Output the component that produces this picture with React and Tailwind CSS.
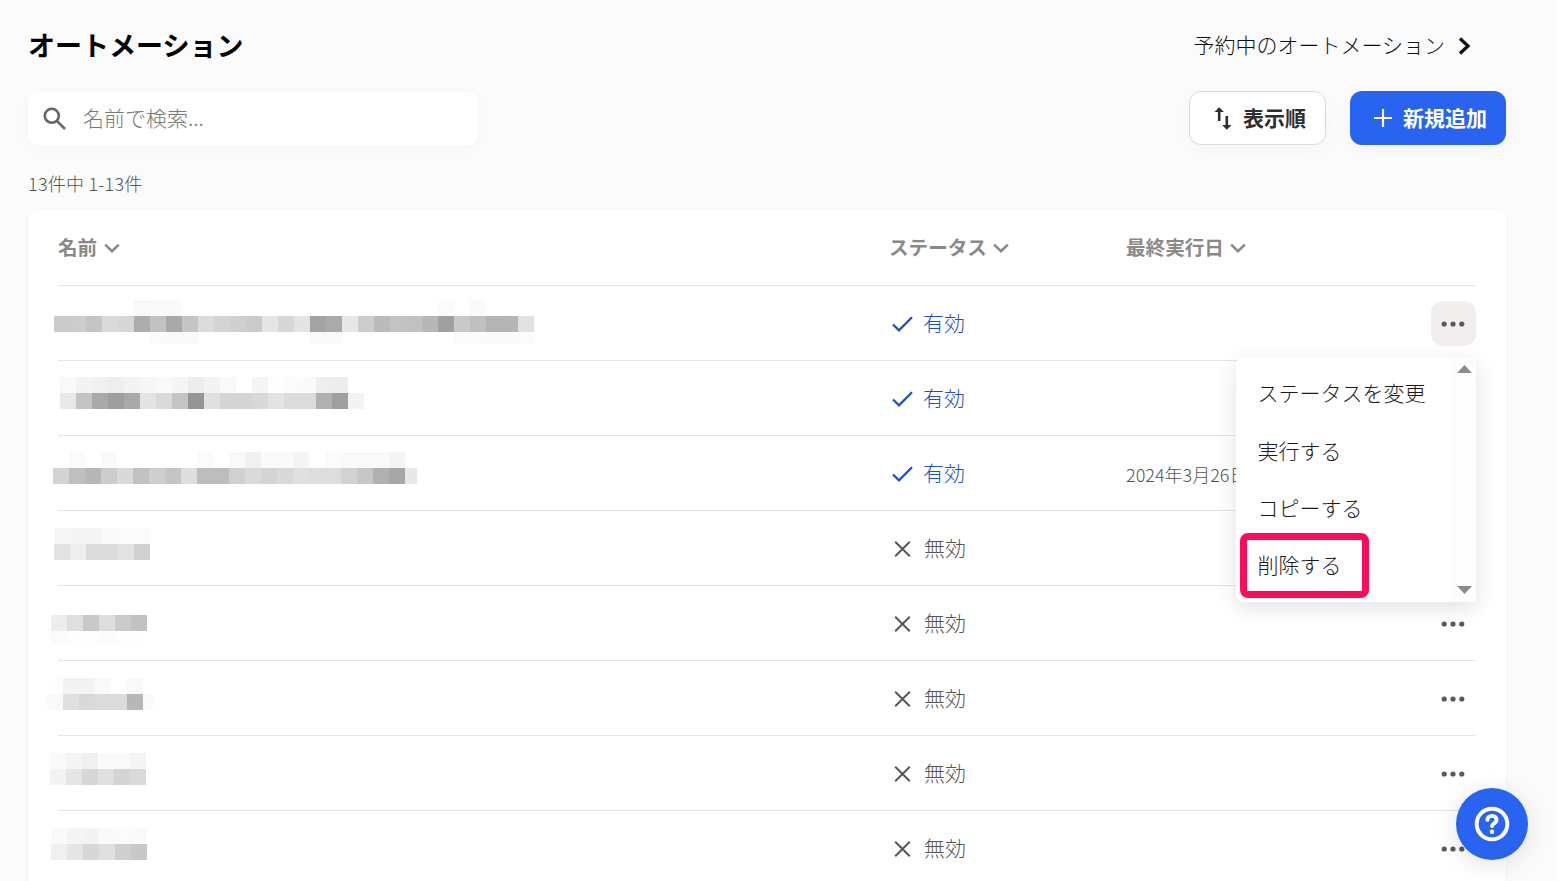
import { useState } from 'react';

// Each redacted name is a strip of 16px tiles, "-" means an empty tile
const automations = [
  {
    id: 1, active: true, date: '', x: -4, y: 14, last: 16, heights: [16, 16, 12],
    tiles: [
      '- - - - - f9f9f7 fafafa fbf9fa - - - - - - - - - - - - - - - - fbfbfb - fafafa - - -',
      'cbcbcb cdcdcd c5c5c5 dadada d6d6d6 adadad c2c2c2 a9a9a9 c5c5c5 dbdbdb d4d4d4 cfcfcf cbcbcb e5e5e5 d7d7d7 e4e4e4 a3a3a3 ababab e7e7e7 cdcdcd bbbbbb c3c3c3 c1c1c1 b7b7b7 a0a0a0 c9c9c9 c0c0c0 b4b4b4 b5b5b5 e2e2e2',
      '- - - - - - fbfbfb fafafa fbf8f9 - - - - - - - f9f9f7 fafafa - - - - - - - fbfbfb fbfbfb fafafa faf9f8 fbfbfb',
    ],
  },
  {
    id: 2, active: true, date: '', x: 2, y: 16, last: 16, heights: [16, 16],
    tiles: [
      'faf9f8 f3f3f3 f1f1f1 eeeeee f3f3f3 f6f6f6 fbf9fa f5f5f5 ededeb f3f3f3 f9f9f7 - f5f5f5 fefefe fbfbfb fafafa eeeeee ededeb -',
      'e9e9e9 c4c4c4 a9a9a9 9e9e9e a9a9a9 e4e4e4 dadada c5c5c5 949494 e0e0e0 d5d5d5 d5d5d5 d9d9d9 e3e3e3 dbdbdb dbdbdb b1b1b1 9f9f9f f3f3f3',
    ],
  },
  {
    id: 3, active: true, date: '2024年3月26日', x: -5, y: 16, last: 12, heights: [16, 16],
    tiles: [
      '- fbfbfb - fbf9fa - - - - - fbfbfb - f9f9f8 f0f0f0 fafafa fafafa f5f5f5 - fbfbfb faf9f8 faf9f8 f9f9f8 f4f4f4 -',
      'd3d3d3 bfbfbf b7b7b7 cdcdcd d9d9d9 c2c2c2 cecece c5c5c5 dedede bdbdbd bdbdbd d0d0d0 dadada d4d4d4 d9d9d9 e0e0e0 dddddd dddddd d2d2d2 c7c7c7 b1b1b1 a7a7a7 e8e8e8',
    ],
  },
  {
    id: 4, active: false, date: '', x: -4, y: 17, last: 16, heights: [16, 16],
    tiles: [
      'f6f6f6 f4f4f4 f4f4f4 fbf9fa fbfbfb fbfbfb',
      'e3e3e3 eeeeee dbdbdb dbdbdb e3e3e3 d0d0d0',
    ],
  },
  {
    id: 5, active: false, date: '', x: -7, y: 29, last: 16, heights: [16, 13],
    tiles: [
      'ededeb dfdfdf c9c9c9 dedede cbcbcb c2c2c2',
      'fbfbfb fefefe fefefe fbfbfb fefefe fefefe',
    ],
  },
  {
    id: 6, active: false, date: '', x: -11, y: 17, last: 10, heights: [16, 16],
    tiles: [
      'fefefe f3f3f3 f3f3f3 f9f9f7 - f9f9f7 -',
      'fafafa e0e0e0 d9d9d9 dbdbdb dbdbdb b7b7b7 fbf9fa',
    ],
  },
  {
    id: 7, active: false, date: '', x: -8, y: 17, last: 16, heights: [16, 16],
    tiles: [
      'fafafa f4f4f4 f0f0f0 fbf9fa fafafa f4f4f4',
      'f3f3f3 e5e5e5 d7d7d7 e0e0e0 d4d4d4 dadada',
    ],
  },
  {
    id: 8, active: false, date: '', x: -7, y: 17, last: 16, heights: [16, 16],
    tiles: [
      'fbf9fa f5f5f5 f3f3f3 fbf9fa fbfbfb fafafa',
      'f0f0f0 e5e5e5 d7d7d7 e0e0e0 cfcfcf c8c8c8',
    ],
  },
];

const menuItems = ['ステータスを変更', '実行する', 'コピーする', '削除する'];

function MaskedName({ row }) {
  return (
    <div className="self-start" style={{ marginLeft: row.x, marginTop: row.y }}>
      {row.tiles.map((line, i) => (
        <div key={i} className="flex" style={{ height: row.heights[i] }}>
          {line.split(' ').map((color, j, all) => (
            <div
              key={j}
              className="shrink-0"
              style={{
                width: j === all.length - 1 ? row.last : 16,
                backgroundColor: color === '-' ? 'transparent' : `#${color}`,
              }}
            />
          ))}
        </div>
      ))}
    </div>
  );
}

function ColumnTitle({ label }) {
  return (
    <div className="flex items-center gap-[6.5px] text-[19.6px] font-bold text-[#8b8987]">
      <span className="mb-[2px]">{label}</span>
      <svg className="mt-px" width="16" height="10" viewBox="0 0 16 10" fill="none" stroke="currentColor" strokeWidth="2.6">
        <path d="M1.2 1.6L8 8.2l6.8-6.6" />
      </svg>
    </div>
  );
}

function Status({ active }) {
  if (active) {
    return (
      <div className="flex items-center pt-px text-[21px] font-light text-[#1c50cc]">
        <svg className="mr-[10px] ml-[3px]" width="21" height="16" viewBox="0 0 21 16" fill="none" stroke="currentColor" strokeWidth="2.3">
          <path d="M1 8.5l6 5.8L20 1.3" />
        </svg>
        <span className="mb-[2px]">有効</span>
      </div>
    );
  }
  return (
    <div className="flex items-center pt-px text-[21px] font-light text-[#555]">
      <svg className="mr-[13px] ml-[5px]" width="17" height="16" viewBox="0 0 17 16" fill="none" stroke="currentColor" strokeWidth="2">
        <path d="M1.2 0.8l14.6 14.4M15.8 0.8L1.2 15.2" />
      </svg>
      <span className="mb-[2px]">無効</span>
    </div>
  );
}

function ActionMenu() {
  return (
    <div className="absolute top-[56px] right-0 z-10 flex h-[245px] w-[240px] rounded-l-lg bg-[#fdfdfd] shadow-[0_6px_20px_rgba(30,30,80,0.13)]">
      <ul className="flex w-[217px] flex-col rounded-lg bg-white pt-[8px]">
        {menuItems.map((item) => (
          <li key={item} className="flex h-[57.3px] items-center pl-[21.5px] text-[21px] font-light whitespace-nowrap text-[#1c1c1c]">
            {item}
          </li>
        ))}
      </ul>
      <div className="flex flex-1 flex-col items-center justify-between py-2 text-[#8b8b8b]">
        <svg width="15" height="8" viewBox="0 0 15 8" fill="currentColor">
          <path d="M7.5 0L15 8H0z" />
        </svg>
        <svg width="15" height="8" viewBox="0 0 15 8" fill="currentColor">
          <path d="M0 0h15L7.5 8z" />
        </svg>
      </div>
      <div className="absolute top-[176px] left-[4px] h-[65px] w-[129px] rounded-[8px] border-7 border-[#ff0b59]" />
    </div>
  );
}

function App() {
  const [openId, setOpenId] = useState(1);

  return (
    <div className="h-screen overflow-hidden bg-[#fbfbfb] pr-[51px] pl-7 font-['Noto_Sans_CJK_JP',sans-serif]">
      <header className="flex h-[91px] items-center justify-between">
        <h1 className="text-[27px] font-bold text-black">オートメーション</h1>
        <a className="mr-[35px] flex items-center gap-[13px] text-[21px] font-light text-[#111]">
          <span className="mb-px">予約中のオートメーション</span>
          <svg width="13" height="18" viewBox="0 0 13 18" fill="none" stroke="currentColor" strokeWidth="3.2">
            <path d="M2 1.5L10 9l-8 7.5" />
          </svg>
        </a>
      </header>

      <div className="flex h-[54px] items-center justify-between">
        <div className="mt-px flex h-[53px] w-[450px] items-center rounded-[9px] bg-white pl-[15px] shadow-[0_4px_18px_rgba(80,30,30,0.025)]">
          <svg width="24" height="24" viewBox="0 0 24 24" fill="none" stroke="#666" strokeWidth="2.6">
            <circle cx="8.8" cy="8.8" r="7" />
            <path d="M13.8 13.8l8.2 8.2" />
          </svg>
          <input
            className="mb-[2px] ml-4 w-[360px] bg-transparent text-[21px] font-light outline-none placeholder:text-[#787878]"
            placeholder="名前で検索..."
          />
        </div>
        <div className="flex gap-6">
          <button className="flex h-[54px] w-[137px] items-center rounded-xl border border-[#dcdcdc] bg-white pl-6 text-[21px] font-bold text-[#2e2e2e] shadow-[0_5px_16px_rgba(80,30,30,0.03)]">
            <svg className="mr-[11px]" width="18" height="23" viewBox="0 0 18 23" fill="none" stroke="currentColor" strokeWidth="2.6">
              <path d="M5.2 3v11M12.8 9v11" />
              <path d="M0.5 5L5.2 0.3 9.9 5zM8.1 18l4.7 4.7 4.7-4.7z" fill="currentColor" stroke="none" />
            </svg>
            表示順
          </button>
          <button className="flex h-[54px] w-[156px] items-center rounded-xl bg-[#2864f0] pl-6 text-[21px] font-bold text-white shadow-[0_5px_16px_rgba(80,30,30,0.03)]">
            <svg className="mr-[11px]" width="18" height="18" viewBox="0 0 18 18" fill="none" stroke="currentColor" strokeWidth="2.2">
              <path d="M9 0v18M0 9h18" />
            </svg>
            新規追加
          </button>
        </div>
      </div>

      <p className="flex h-[65px] items-center pt-[11px] text-[18px] font-light tracking-[0.25px] text-[#555]">13件中 1-13件</p>

      <main className="h-[760px] rounded-[9px] bg-white px-[30px] shadow-[0_2px_5px_rgba(0,0,0,0.04)]">
        <div className="grid h-[76px] grid-cols-[831px_237px_1fr_45px] items-center border-b border-[#e5e5e5]">
          <ColumnTitle label="名前" />
          <ColumnTitle label="ステータス" />
          <ColumnTitle label="最終実行日" />
        </div>
        {automations.map((row) => (
          <div key={row.id} className="grid h-[75px] grid-cols-[831px_237px_1fr_45px] items-center border-b border-[#e5e5e5]">
            <MaskedName row={row} />
            <Status active={row.active} />
            <div className="pt-[2px] text-[18px] font-light text-[#555]">{row.date}</div>
            <div className="relative">
              <button
                onClick={() => setOpenId(openId === row.id ? null : row.id)}
                className={
                  openId === row.id
                    ? 'flex h-[45px] w-[45px] items-center justify-center rounded-xl bg-[#f2eeed]'
                    : 'flex h-[45px] w-[45px] items-center justify-center rounded-xl'
                }
              >
                <svg className="mt-px mr-px" width="24" height="6" viewBox="0 0 24 6" fill="#595959">
                  <circle cx="3.2" cy="3" r="2.6" />
                  <circle cx="12" cy="3" r="2.6" />
                  <circle cx="20.8" cy="3" r="2.6" />
                </svg>
              </button>
              {openId === row.id && <ActionMenu />}
            </div>
          </div>
        ))}
      </main>

      <button className="fixed right-[29px] bottom-[21px] z-20 flex h-[72px] w-[72px] items-center justify-center rounded-full bg-[#2864f0] shadow-[0_4px_24px_rgba(0,0,0,0.12)]">
        <svg width="36" height="36" viewBox="0 0 36 36" fill="none" stroke="#fff">
          <circle cx="18" cy="18" r="15.3" strokeWidth="4" />
          <path d="M13.4 13.9c0-2.4 1.9-4 4.6-4s4.6 1.7 4.6 4c0 3.4-4.6 3.3-4.6 6.2" strokeWidth="3.9" strokeLinecap="round" />
          <circle cx="18" cy="25.8" r="2.2" fill="#fff" stroke="none" />
        </svg>
      </button>
    </div>
  );
}

export default App;
